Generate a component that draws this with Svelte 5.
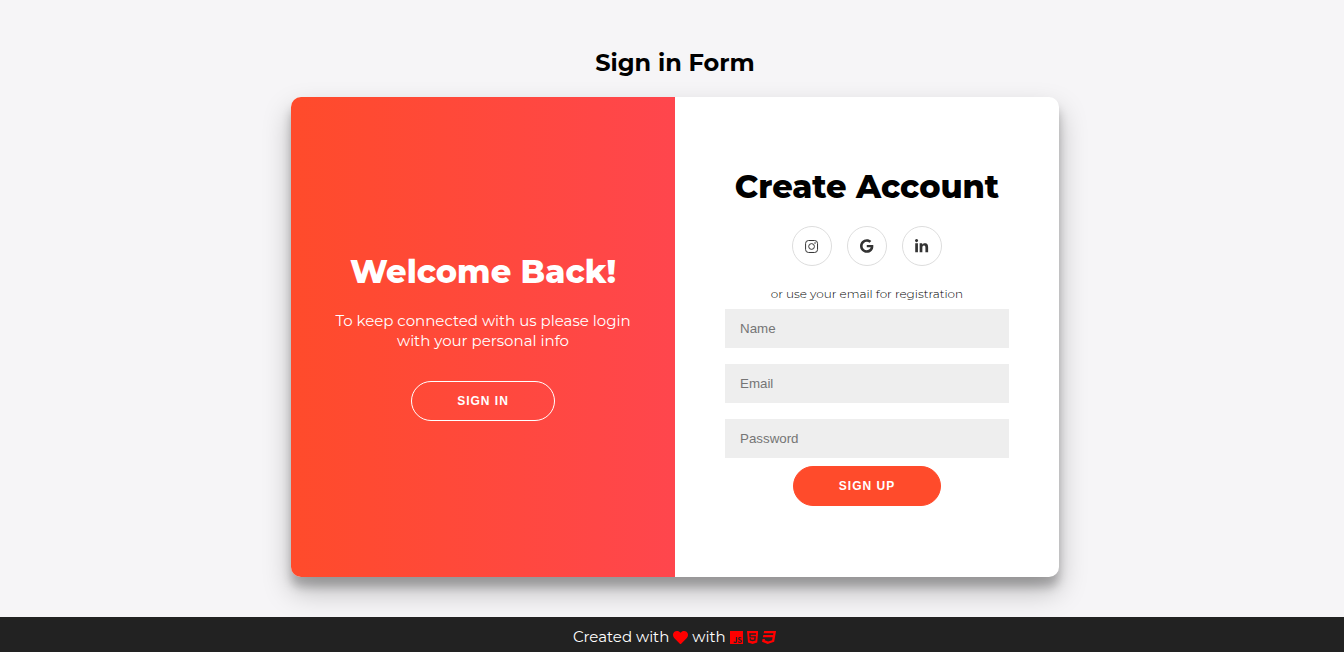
<script>
  const fields = [
    { id: 'name', label: 'Name', type: 'text' },
    { id: 'email', label: 'Email', type: 'email' },
    { id: 'password', label: 'Password', type: 'password' }
  ];

  const tech = [
    { name: 'JavaScript', box: '0 0 448 512', path: 'M0 32v448h448V32H0zm243.8 349.4c0 43.6-25.6 63.5-62.9 63.5-33.7 0-53.2-17.4-63.2-38.5l34.3-20.7c6.6 11.7 12.6 21.6 27.1 21.6 13.8 0 22.6-5.4 22.6-26.5V237.7h42.1v143.7zm99.6 63.5c-39.1 0-64.4-18.6-76.7-43l34.3-19.8c9 14.7 20.8 25.6 41.5 25.6 17.4 0 28.6-8.7 28.6-20.8 0-14.4-11.4-19.5-30.7-28l-10.5-4.5c-30.4-12.9-50.5-29.2-50.5-63.5 0-31.6 24.1-55.6 61.6-55.6 26.8 0 46 9.3 59.8 33.7L368 290c-7.2-12.9-15-18-27.1-18-12.3 0-20.1 7.8-20.1 18 0 12.6 7.8 17.7 25.9 25.6l10.5 4.5c35.8 15.3 55.9 31 55.9 66.2 0 37.8-29.8 58.6-69.7 58.6z' },
    { name: 'HTML5', box: '0 0 384 512', path: 'M0 32l34.9 395.8L191.5 480l157.6-52.2L384 32H0zm308.2 127.9H124.4l4.1 49.4h175.6l-13.6 148.4-97.9 27v.3h-1.1l-98.7-27.3-6-75.8h47.7L138 320l53.5 14.5 53.7-14.5 6-62.2H84.3L71.5 112.2h241.1l-4.4 47.7z' },
    { name: 'CSS3', box: '0 0 480 512', path: 'M480 32l-64 368-223.3 80L0 400l19.6-94.8h82l-8 40.6L210 390.2l134.1-44.4 18.8-97.1H29.5l16-82h333.7l10.5-52.7H56.3l16.3-82H480z' }
  ];
</script>

<div class="page">
  <main>
    <h2>Sign in Form</h2>
    <div class="card">
      <section class="welcome">
        <h1>Welcome Back!</h1>
        <p>To keep connected with us please login with your personal info</p>
        <button type="button" class="ghost">Sign In</button>
      </section>

      <form onsubmit={(e) => e.preventDefault()}>
        <h1>Create Account</h1>
        <div class="social">
          <a href="#instagram" aria-label="Instagram">
            <svg viewBox="0 0 448 512" height="15" fill="none" stroke="currentColor" stroke-width="34">
              <rect x="20" y="52" width="408" height="408" rx="100" />
              <circle cx="224" cy="256" r="98" />
              <circle cx="343" cy="137" r="27" fill="currentColor" stroke="none" />
            </svg>
          </a>
          <a href="#google" aria-label="Google">
            <svg viewBox="0 0 488 512" height="14" fill="currentColor">
              <path d="M488 261.8C488 403.3 391.1 504 248 504 110.8 504 0 393.2 0 256S110.8 8 248 8c66.8 0 123 24.5 166.3 64.9l-67.5 64.9C258.5 52.6 94.3 116.6 94.3 256c0 86.5 69.1 156.6 153.7 156.6 98.2 0 135-70.4 140.8-106.9H248v-85.3h236.1c2.3 12.7 3.9 24.9 3.9 41.4z" />
            </svg>
          </a>
          <a href="#linkedin" aria-label="LinkedIn">
            <svg viewBox="0 0 448 512" height="15" fill="currentColor">
              <path d="M100.28 448H7.4V148.9h92.88zM53.79 108.1C24.09 108.1 0 83.5 0 53.8a53.79 53.79 0 0 1 107.58 0c0 29.7-24.1 54.3-53.79 54.3zM447.9 448h-92.68V302.4c0-34.7-.7-79.2-48.29-79.2-48.29 0-55.69 37.7-55.69 76.7V448h-92.78V148.9h89.08v40.8h1.3c12.4-23.5 42.69-48.3 87.88-48.3 94 0 111.28 61.9 111.28 142.3V448z" />
            </svg>
          </a>
        </div>
        <span class="hint">or use your email for registration</span>
        {#each fields as field}
          <input id={field.id} type={field.type} placeholder={field.label} aria-label={field.label} />
        {/each}
        <button type="submit">Sign Up</button>
      </form>
    </div>
  </main>

  <footer>
    <span>Created with</span>
    <svg viewBox="0 0 512 512" height="15" fill="currentColor" role="img" aria-label="love">
      <path d="M462.3 62.6C407.5 15.9 326 24.3 275.7 76.2L256 96.5l-19.7-20.3C186.1 24.3 104.5 15.9 49.7 62.6c-62.8 53.6-66.1 149.8-9.9 207.9l193.5 199.8c12.5 12.9 32.8 12.9 45.3 0l193.5-199.8c56.3-58.1 53-154.3-9.8-207.9z" />
    </svg>
    <span>with</span>
    {#each tech as item}
      <svg viewBox={item.box} height="15" fill="currentColor" role="img" aria-label={item.name}>
        <path d={item.path} />
      </svg>
    {/each}
  </footer>
</div>

<style>
  :global(body) {
    margin: 0;
    background: #f6f5f7;
  }

  .page {
    box-sizing: border-box;
    min-height: 100vh;
    display: flex;
    flex-direction: column;
    background: #f6f5f7;
    color: #000;
    font-family: Montserrat, Inter, 'Open Sans', sans-serif;
  }

  main {
    flex: 1;
    display: flex;
    flex-direction: column;
    align-items: center;
    padding: 48px 0 40px 6px;
  }

  h1,
  h2,
  p {
    margin: 0;
  }

  h2 {
    margin-bottom: 20px;
    font-size: 24px;
    line-height: 29px;
    font-weight: 700;
  }

  h1 {
    font-size: 32px;
    line-height: 38px;
    font-weight: 800;
    white-space: nowrap;
  }

  .card {
    display: grid;
    grid-template-columns: 1fr 1fr;
    width: 100%;
    max-width: 768px;
    min-height: 480px;
    overflow: hidden;
    border-radius: 10px;
    background: #fff;
    box-shadow: 0 14px 28px rgba(0, 0, 0, 0.25), 0 10px 10px rgba(0, 0, 0, 0.22);
  }

  .welcome,
  form {
    display: flex;
    flex-direction: column;
    align-items: center;
    justify-content: center;
    text-align: center;
  }

  .welcome {
    padding: 0 40px;
    color: #fff;
    background: linear-gradient(to right, #ff4b2b, #ff464d);
  }

  .welcome p {
    margin: 20px 0 30px;
    font-size: 15px;
    line-height: 20px;
  }

  form {
    padding: 0 50px;
  }

  .social {
    display: flex;
    gap: 15px;
    margin: 20px 0;
  }

  .social a {
    box-sizing: border-box;
    width: 40px;
    height: 40px;
    display: flex;
    align-items: center;
    justify-content: center;
    border: 1px solid #ddd;
    border-radius: 50%;
    color: #333;
  }

  .hint {
    font-size: 12px;
    line-height: 15px;
    font-weight: 300;
  }

  input {
    box-sizing: border-box;
    width: 100%;
    height: 39px;
    margin: 8px 0;
    padding: 12px 15px;
    border: 0;
    background: #eee;
    font-family: 'Liberation Sans', Arial, sans-serif;
  }

  input::placeholder {
    color: #757575;
  }

  button {
    padding: 12px 45px;
    border: 1px solid #ff4b2b;
    border-radius: 20px;
    background: #ff4b2b;
    color: #fff;
    font-family: 'Liberation Sans', Arial, sans-serif;
    font-size: 12px;
    line-height: 14px;
    font-weight: 700;
    letter-spacing: 1px;
    text-transform: uppercase;
    cursor: pointer;
  }

  .ghost {
    border-color: #fff;
    background: transparent;
  }

  footer {
    display: flex;
    align-items: center;
    justify-content: center;
    gap: 4px;
    padding: 10px 0 5px 5px;
    background: #222;
    color: #fff;
    font-size: 15px;
    line-height: 20px;
  }

  footer svg {
    color: #f00;
  }
</style>
